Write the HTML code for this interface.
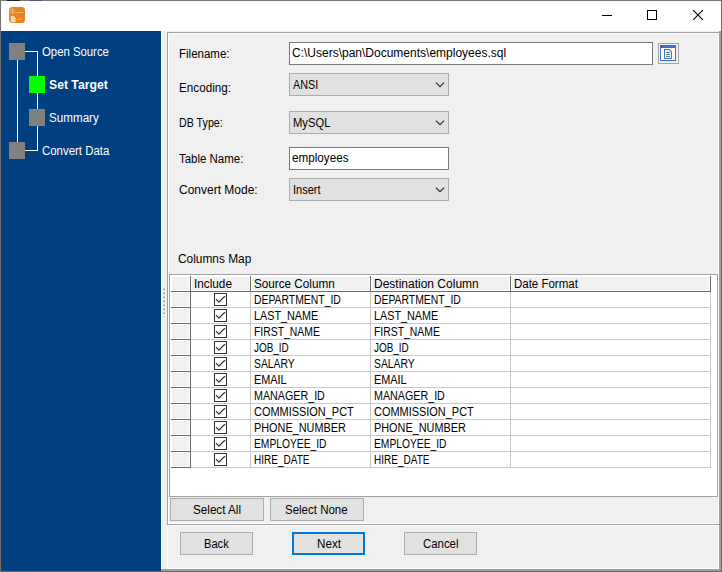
<!DOCTYPE html>
<html><head><meta charset="utf-8">
<style>
*{margin:0;padding:0;box-sizing:border-box}
html,body{width:722px;height:572px;overflow:hidden;background:#f0f0f0}
body{position:relative;font-family:"Liberation Sans",sans-serif;font-size:12px;color:#000}
.a{position:absolute}
.t{position:absolute;white-space:pre;line-height:12px;height:12px;transform-origin:0 0}
.w{color:#fff}
.sq{position:absolute;width:16px;height:17px;background:#808080}
.ln{position:absolute;background:#fff}
.tb{position:absolute;background:#fff;border:1px solid #7a7a7a}
.cb{position:absolute;background:#e1e1e1;border:1px solid #adadad}
.btn{position:absolute;background:#e1e1e1;border:1px solid #adadad}
.chev{position:absolute;width:9px;height:5px}
</style></head><body>
<div class="a" style="left:0;top:0;width:722px;height:1px;background:#777"></div><div class="a" style="left:7px;top:0;width:13px;height:1px;background:#222"></div><div class="a" style="left:30px;top:0;width:12px;height:1px;background:#4a5a78"></div>
<div class="a" style="left:0;top:0;width:1px;height:572px;background:#76716c"></div>
<div class="a" style="left:721px;top:0;width:1px;height:572px;background:#6b6b6b"></div>
<div class="a" style="left:0;top:571px;width:722px;height:1px;background:#6b6b6b"></div>
<div class="a" style="left:1px;top:1px;width:720px;height:30px;background:#fff"></div>
<svg class="a" style="left:9px;top:7px" width="16" height="16" viewBox="0 0 16 16"><rect x="0" y="0" width="16" height="16" rx="3.5" fill="#e8821f"/><circle cx="3.3" cy="4.0" r="2.5" fill="none" stroke="#f5c491" stroke-width="0.5"/><path d="M2.8 2.4h1.2v2.2h-1.2z" fill="#fbe3c8"/><path d="M2.3 4.8h2.2v0.6h-2.2z" fill="#f6c89a"/><path d="M6.3 5.0h8.0v1.1h-8.0z" fill="#f2ad6c"/><path d="M7.9 7.6h0.9v0.9h-0.9z" fill="#f4b77c"/><path d="M2.1 9.3h2.7l1.4 1.4v4.2h-4.1z" fill="#f8d2ac" stroke="#fde8d3" stroke-width="0.6"/><path d="M8.0 11.8h5.0v1.0h-5.0z" fill="#f2ad6c"/></svg>
<div class="a" style="left:602px;top:15px;width:10px;height:1px;background:#000"></div>
<div class="a" style="left:647px;top:10px;width:10px;height:10px;border:1px solid #000"></div>
<svg class="a" style="left:692px;top:9px" width="13" height="13" viewBox="0 0 13 13"><path d="M1.1 1.1L10.9 10.9M10.9 1.1L1.1 10.9" stroke="#000" stroke-width="1.1"/></svg>
<div class="a" style="left:1px;top:31px;width:160px;height:540px;background:#003f80"></div>
<div class="ln" style="left:17px;top:51px;width:1px;height:91px"></div>
<div class="ln" style="left:24px;top:51px;width:14px;height:1px"></div>
<div class="ln" style="left:37px;top:51px;width:1px;height:100px"></div>
<div class="ln" style="left:24px;top:150px;width:14px;height:1px"></div>
<div class="sq" style="left:9px;top:43px"></div>
<div class="sq" style="left:29px;top:76px;background:#00ff00"></div>
<div class="sq" style="left:29px;top:109px"></div>
<div class="sq" style="left:9px;top:142px"></div>

<div class="t" style="left:42px;top:46px;transform:scaleX(0.946);color:#fff">Open Source</div>
<div class="t" style="left:49px;top:79px;transform:scaleX(1.016);color:#fff;font-weight:bold">Set Target</div>
<div class="t" style="left:49px;top:112px;transform:scaleX(0.97);color:#fff">Summary</div>
<div class="t" style="left:42px;top:145px;transform:scaleX(0.952);color:#fff">Convert Data</div>
<div class="a" style="left:161px;top:31px;width:1px;height:540px;background:#fafafa"></div><div class="a" style="left:164px;top:288px;width:1px;height:1px;background:#b0b0b0"></div><div class="a" style="left:163px;top:289px;width:2px;height:1px;background:#a8a8a8"></div><div class="a" style="left:164px;top:292px;width:1px;height:1px;background:#b0b0b0"></div><div class="a" style="left:163px;top:293px;width:2px;height:1px;background:#a8a8a8"></div><div class="a" style="left:164px;top:296px;width:1px;height:1px;background:#b0b0b0"></div><div class="a" style="left:163px;top:297px;width:2px;height:1px;background:#a8a8a8"></div><div class="a" style="left:164px;top:300px;width:1px;height:1px;background:#b0b0b0"></div><div class="a" style="left:163px;top:301px;width:2px;height:1px;background:#a8a8a8"></div><div class="a" style="left:164px;top:304px;width:1px;height:1px;background:#b0b0b0"></div><div class="a" style="left:163px;top:305px;width:2px;height:1px;background:#a8a8a8"></div><div class="a" style="left:164px;top:308px;width:1px;height:1px;background:#b0b0b0"></div><div class="a" style="left:163px;top:309px;width:2px;height:1px;background:#a8a8a8"></div><div class="a" style="left:164px;top:312px;width:1px;height:1px;background:#b0b0b0"></div><div class="a" style="left:163px;top:313px;width:2px;height:1px;background:#a8a8a8"></div><div class="a" style="left:164px;top:316px;width:1px;height:1px;background:#c0c0c0"></div>
<div class="a" style="left:719px;top:31px;width:2px;height:540px;background:#a0a0a0"></div>
<div class="a" style="left:161px;top:569px;width:560px;height:2px;background:#a0a0a0"></div>
<div class="a" style="left:167px;top:32px;width:553px;height:493px;border:1px solid #a0a0a0"></div>
<div class="a" style="left:168px;top:33px;width:551px;height:491px;border:1px solid #fff"></div>
<div class="a" style="left:167px;top:525px;width:552px;height:44px;border:1px solid #fff"></div>

<div class="t" style="left:179px;top:48px;transform:scaleX(0.958);">Filename:</div>
<div class="tb" style="left:289px;top:42px;width:364px;height:23px"></div>
<div class="t" style="left:292px;top:47px;">C:\Users\pan\Documents\employees.sql</div>
<svg class="a" style="left:658px;top:43px" width="21" height="21" viewBox="0 0 21 21"><rect x="0.5" y="0.5" width="20" height="20" fill="#ebe9e6" stroke="#a3a3a3"/><rect x="1.5" y="1.5" width="18" height="18" fill="none" stroke="#f5f5f5"/><rect x="2" y="2" width="16" height="16" fill="#3b72d2"/><rect x="3" y="5" width="14" height="12" fill="#fdfbf4"/><rect x="3" y="3" width="1.4" height="1.4" fill="#e01010"/><path d="M6 6h5.5l2.5 2.5v7.5h-8z" fill="#3f78d4"/><path d="M7 7h4.1l1.9 1.9v6.1h-6z" fill="#e2f6fb"/><rect x="8" y="9" width="4" height="1" fill="#647c7c"/><rect x="8" y="11" width="4" height="1" fill="#647c7c"/><rect x="8" y="13" width="4" height="1" fill="#647c7c"/></svg>
<div class="t" style="left:179px;top:82px;transform:scaleX(0.974);">Encoding:</div>
<div class="cb" style="left:289px;top:73px;width:160px;height:23px"></div>
<div class="t" style="left:293px;top:79px;transform:scaleX(0.9);">ANSI</div>
<svg class="chev" style="left:435px;top:82px;width:10px;height:6px" viewBox="0 0 10 6"><path d="M0.9 0.6L5 4.7L9.1 0.6" stroke="#2a2a2a" stroke-width="1.15" fill="none"/></svg>
<div class="t" style="left:179px;top:117px;transform:scaleX(0.89);">DB Type:</div>
<div class="cb" style="left:289px;top:111px;width:160px;height:23px"></div>
<div class="t" style="left:293px;top:117px;transform:scaleX(0.935);">MySQL</div>
<svg class="chev" style="left:435px;top:120px;width:10px;height:6px" viewBox="0 0 10 6"><path d="M0.9 0.6L5 4.7L9.1 0.6" stroke="#2a2a2a" stroke-width="1.15" fill="none"/></svg>
<div class="t" style="left:179px;top:153px;transform:scaleX(0.955);">Table Name:</div>
<div class="tb" style="left:289px;top:147px;width:160px;height:23px"></div>
<div class="t" style="left:292px;top:152px;transform:scaleX(0.974);">employees</div>
<div class="t" style="left:179px;top:184px;">Convert Mode:</div>
<div class="cb" style="left:289px;top:178px;width:160px;height:23px"></div>
<div class="t" style="left:293px;top:184px;transform:scaleX(0.92);">Insert</div>
<svg class="chev" style="left:435px;top:187px;width:10px;height:6px" viewBox="0 0 10 6"><path d="M0.9 0.6L5 4.7L9.1 0.6" stroke="#2a2a2a" stroke-width="1.15" fill="none"/></svg>
<div class="t" style="left:178px;top:253px;transform:scaleX(0.99);">Columns Map</div>
<div class="a" style="left:169px;top:274px;width:549px;height:223px;background:#fff;border:1px solid #a0a0a0"></div>
<div class="a" style="left:171px;top:276px;width:19px;height:15px;background:#f0f0f0;border:1px solid #fff"></div>
<div class="a" style="left:190px;top:276px;width:1px;height:16px;background:#696969"></div>
<div class="a" style="left:191px;top:276px;width:59px;height:15px;background:#f0f0f0;border:1px solid #fff"></div>
<div class="a" style="left:250px;top:276px;width:1px;height:16px;background:#696969"></div>
<div class="a" style="left:251px;top:276px;width:119px;height:15px;background:#f0f0f0;border:1px solid #fff"></div>
<div class="a" style="left:370px;top:276px;width:1px;height:16px;background:#696969"></div>
<div class="a" style="left:371px;top:276px;width:139px;height:15px;background:#f0f0f0;border:1px solid #fff"></div>
<div class="a" style="left:510px;top:276px;width:1px;height:16px;background:#696969"></div>
<div class="a" style="left:511px;top:276px;width:199px;height:15px;background:#f0f0f0;border:1px solid #fff"></div>
<div class="a" style="left:710px;top:276px;width:1px;height:16px;background:#696969"></div>
<div class="a" style="left:171px;top:291px;width:540px;height:1px;background:#696969"></div>
<div class="t" style="left:194px;top:278px;transform:scaleX(0.98);">Include</div>
<div class="t" style="left:254px;top:278px;transform:scaleX(0.976);">Source Column</div>
<div class="t" style="left:374px;top:278px;">Destination Column</div>
<div class="t" style="left:514px;top:278px;transform:scaleX(0.957);">Date Format</div>
<div class="a" style="left:171px;top:292px;width:19px;height:15px;background:#f0f0f0;border:1px solid #fff"></div>
<div class="a" style="left:171px;top:307px;width:20px;height:1px;background:#696969"></div>
<div class="a" style="left:190px;top:292px;width:1px;height:16px;background:#696969"></div>
<div class="a" style="left:191px;top:307px;width:520px;height:1px;background:#c8c8c8"></div>
<div class="a" style="left:250px;top:292px;width:1px;height:15px;background:#c8c8c8"></div>
<div class="a" style="left:370px;top:292px;width:1px;height:15px;background:#c8c8c8"></div>
<div class="a" style="left:510px;top:292px;width:1px;height:15px;background:#c8c8c8"></div>
<div class="a" style="left:710px;top:292px;width:1px;height:15px;background:#c8c8c8"></div>
<svg class="a" style="left:214px;top:293px" width="13" height="13" viewBox="0 0 13 13"><rect x="0.5" y="0.5" width="12" height="12" fill="#fff" stroke="#333"/><path d="M2 6.1L4.9 9.1L11.1 3.1" stroke="#333" stroke-width="1.3" fill="none"/></svg>
<div class="t" style="left:254px;top:294px;transform:scaleX(0.866);">DEPARTMENT_ID</div>
<div class="t" style="left:374px;top:294px;transform:scaleX(0.866);">DEPARTMENT_ID</div>
<div class="a" style="left:171px;top:308px;width:19px;height:15px;background:#f0f0f0;border:1px solid #fff"></div>
<div class="a" style="left:171px;top:323px;width:20px;height:1px;background:#696969"></div>
<div class="a" style="left:190px;top:308px;width:1px;height:16px;background:#696969"></div>
<div class="a" style="left:191px;top:323px;width:520px;height:1px;background:#c8c8c8"></div>
<div class="a" style="left:250px;top:308px;width:1px;height:15px;background:#c8c8c8"></div>
<div class="a" style="left:370px;top:308px;width:1px;height:15px;background:#c8c8c8"></div>
<div class="a" style="left:510px;top:308px;width:1px;height:15px;background:#c8c8c8"></div>
<div class="a" style="left:710px;top:308px;width:1px;height:15px;background:#c8c8c8"></div>
<svg class="a" style="left:214px;top:309px" width="13" height="13" viewBox="0 0 13 13"><rect x="0.5" y="0.5" width="12" height="12" fill="#fff" stroke="#333"/><path d="M2 6.1L4.9 9.1L11.1 3.1" stroke="#333" stroke-width="1.3" fill="none"/></svg>
<div class="t" style="left:254px;top:310px;transform:scaleX(0.899);">LAST_NAME</div>
<div class="t" style="left:374px;top:310px;transform:scaleX(0.899);">LAST_NAME</div>
<div class="a" style="left:171px;top:324px;width:19px;height:15px;background:#f0f0f0;border:1px solid #fff"></div>
<div class="a" style="left:171px;top:339px;width:20px;height:1px;background:#696969"></div>
<div class="a" style="left:190px;top:324px;width:1px;height:16px;background:#696969"></div>
<div class="a" style="left:191px;top:339px;width:520px;height:1px;background:#c8c8c8"></div>
<div class="a" style="left:250px;top:324px;width:1px;height:15px;background:#c8c8c8"></div>
<div class="a" style="left:370px;top:324px;width:1px;height:15px;background:#c8c8c8"></div>
<div class="a" style="left:510px;top:324px;width:1px;height:15px;background:#c8c8c8"></div>
<div class="a" style="left:710px;top:324px;width:1px;height:15px;background:#c8c8c8"></div>
<svg class="a" style="left:214px;top:325px" width="13" height="13" viewBox="0 0 13 13"><rect x="0.5" y="0.5" width="12" height="12" fill="#fff" stroke="#333"/><path d="M2 6.1L4.9 9.1L11.1 3.1" stroke="#333" stroke-width="1.3" fill="none"/></svg>
<div class="t" style="left:254px;top:326px;transform:scaleX(0.866);">FIRST_NAME</div>
<div class="t" style="left:374px;top:326px;transform:scaleX(0.866);">FIRST_NAME</div>
<div class="a" style="left:171px;top:340px;width:19px;height:15px;background:#f0f0f0;border:1px solid #fff"></div>
<div class="a" style="left:171px;top:355px;width:20px;height:1px;background:#696969"></div>
<div class="a" style="left:190px;top:340px;width:1px;height:16px;background:#696969"></div>
<div class="a" style="left:191px;top:355px;width:520px;height:1px;background:#c8c8c8"></div>
<div class="a" style="left:250px;top:340px;width:1px;height:15px;background:#c8c8c8"></div>
<div class="a" style="left:370px;top:340px;width:1px;height:15px;background:#c8c8c8"></div>
<div class="a" style="left:510px;top:340px;width:1px;height:15px;background:#c8c8c8"></div>
<div class="a" style="left:710px;top:340px;width:1px;height:15px;background:#c8c8c8"></div>
<svg class="a" style="left:214px;top:341px" width="13" height="13" viewBox="0 0 13 13"><rect x="0.5" y="0.5" width="12" height="12" fill="#fff" stroke="#333"/><path d="M2 6.1L4.9 9.1L11.1 3.1" stroke="#333" stroke-width="1.3" fill="none"/></svg>
<div class="t" style="left:254px;top:342px;transform:scaleX(0.826);">JOB_ID</div>
<div class="t" style="left:374px;top:342px;transform:scaleX(0.826);">JOB_ID</div>
<div class="a" style="left:171px;top:356px;width:19px;height:15px;background:#f0f0f0;border:1px solid #fff"></div>
<div class="a" style="left:171px;top:371px;width:20px;height:1px;background:#696969"></div>
<div class="a" style="left:190px;top:356px;width:1px;height:16px;background:#696969"></div>
<div class="a" style="left:191px;top:371px;width:520px;height:1px;background:#c8c8c8"></div>
<div class="a" style="left:250px;top:356px;width:1px;height:15px;background:#c8c8c8"></div>
<div class="a" style="left:370px;top:356px;width:1px;height:15px;background:#c8c8c8"></div>
<div class="a" style="left:510px;top:356px;width:1px;height:15px;background:#c8c8c8"></div>
<div class="a" style="left:710px;top:356px;width:1px;height:15px;background:#c8c8c8"></div>
<svg class="a" style="left:214px;top:357px" width="13" height="13" viewBox="0 0 13 13"><rect x="0.5" y="0.5" width="12" height="12" fill="#fff" stroke="#333"/><path d="M2 6.1L4.9 9.1L11.1 3.1" stroke="#333" stroke-width="1.3" fill="none"/></svg>
<div class="t" style="left:254px;top:358px;transform:scaleX(0.864);">SALARY</div>
<div class="t" style="left:374px;top:358px;transform:scaleX(0.864);">SALARY</div>
<div class="a" style="left:171px;top:372px;width:19px;height:15px;background:#f0f0f0;border:1px solid #fff"></div>
<div class="a" style="left:171px;top:387px;width:20px;height:1px;background:#696969"></div>
<div class="a" style="left:190px;top:372px;width:1px;height:16px;background:#696969"></div>
<div class="a" style="left:191px;top:387px;width:520px;height:1px;background:#c8c8c8"></div>
<div class="a" style="left:250px;top:372px;width:1px;height:15px;background:#c8c8c8"></div>
<div class="a" style="left:370px;top:372px;width:1px;height:15px;background:#c8c8c8"></div>
<div class="a" style="left:510px;top:372px;width:1px;height:15px;background:#c8c8c8"></div>
<div class="a" style="left:710px;top:372px;width:1px;height:15px;background:#c8c8c8"></div>
<svg class="a" style="left:214px;top:373px" width="13" height="13" viewBox="0 0 13 13"><rect x="0.5" y="0.5" width="12" height="12" fill="#fff" stroke="#333"/><path d="M2 6.1L4.9 9.1L11.1 3.1" stroke="#333" stroke-width="1.3" fill="none"/></svg>
<div class="t" style="left:254px;top:374px;transform:scaleX(0.906);">EMAIL</div>
<div class="t" style="left:374px;top:374px;transform:scaleX(0.906);">EMAIL</div>
<div class="a" style="left:171px;top:388px;width:19px;height:15px;background:#f0f0f0;border:1px solid #fff"></div>
<div class="a" style="left:171px;top:403px;width:20px;height:1px;background:#696969"></div>
<div class="a" style="left:190px;top:388px;width:1px;height:16px;background:#696969"></div>
<div class="a" style="left:191px;top:403px;width:520px;height:1px;background:#c8c8c8"></div>
<div class="a" style="left:250px;top:388px;width:1px;height:15px;background:#c8c8c8"></div>
<div class="a" style="left:370px;top:388px;width:1px;height:15px;background:#c8c8c8"></div>
<div class="a" style="left:510px;top:388px;width:1px;height:15px;background:#c8c8c8"></div>
<div class="a" style="left:710px;top:388px;width:1px;height:15px;background:#c8c8c8"></div>
<svg class="a" style="left:214px;top:389px" width="13" height="13" viewBox="0 0 13 13"><rect x="0.5" y="0.5" width="12" height="12" fill="#fff" stroke="#333"/><path d="M2 6.1L4.9 9.1L11.1 3.1" stroke="#333" stroke-width="1.3" fill="none"/></svg>
<div class="t" style="left:254px;top:390px;transform:scaleX(0.893);">MANAGER_ID</div>
<div class="t" style="left:374px;top:390px;transform:scaleX(0.893);">MANAGER_ID</div>
<div class="a" style="left:171px;top:404px;width:19px;height:15px;background:#f0f0f0;border:1px solid #fff"></div>
<div class="a" style="left:171px;top:419px;width:20px;height:1px;background:#696969"></div>
<div class="a" style="left:190px;top:404px;width:1px;height:16px;background:#696969"></div>
<div class="a" style="left:191px;top:419px;width:520px;height:1px;background:#c8c8c8"></div>
<div class="a" style="left:250px;top:404px;width:1px;height:15px;background:#c8c8c8"></div>
<div class="a" style="left:370px;top:404px;width:1px;height:15px;background:#c8c8c8"></div>
<div class="a" style="left:510px;top:404px;width:1px;height:15px;background:#c8c8c8"></div>
<div class="a" style="left:710px;top:404px;width:1px;height:15px;background:#c8c8c8"></div>
<svg class="a" style="left:214px;top:405px" width="13" height="13" viewBox="0 0 13 13"><rect x="0.5" y="0.5" width="12" height="12" fill="#fff" stroke="#333"/><path d="M2 6.1L4.9 9.1L11.1 3.1" stroke="#333" stroke-width="1.3" fill="none"/></svg>
<div class="t" style="left:254px;top:406px;transform:scaleX(0.912);">COMMISSION_PCT</div>
<div class="t" style="left:374px;top:406px;transform:scaleX(0.912);">COMMISSION_PCT</div>
<div class="a" style="left:171px;top:420px;width:19px;height:15px;background:#f0f0f0;border:1px solid #fff"></div>
<div class="a" style="left:171px;top:435px;width:20px;height:1px;background:#696969"></div>
<div class="a" style="left:190px;top:420px;width:1px;height:16px;background:#696969"></div>
<div class="a" style="left:191px;top:435px;width:520px;height:1px;background:#c8c8c8"></div>
<div class="a" style="left:250px;top:420px;width:1px;height:15px;background:#c8c8c8"></div>
<div class="a" style="left:370px;top:420px;width:1px;height:15px;background:#c8c8c8"></div>
<div class="a" style="left:510px;top:420px;width:1px;height:15px;background:#c8c8c8"></div>
<div class="a" style="left:710px;top:420px;width:1px;height:15px;background:#c8c8c8"></div>
<svg class="a" style="left:214px;top:421px" width="13" height="13" viewBox="0 0 13 13"><rect x="0.5" y="0.5" width="12" height="12" fill="#fff" stroke="#333"/><path d="M2 6.1L4.9 9.1L11.1 3.1" stroke="#333" stroke-width="1.3" fill="none"/></svg>
<div class="t" style="left:254px;top:422px;transform:scaleX(0.906);">PHONE_NUMBER</div>
<div class="t" style="left:374px;top:422px;transform:scaleX(0.906);">PHONE_NUMBER</div>
<div class="a" style="left:171px;top:436px;width:19px;height:15px;background:#f0f0f0;border:1px solid #fff"></div>
<div class="a" style="left:171px;top:451px;width:20px;height:1px;background:#696969"></div>
<div class="a" style="left:190px;top:436px;width:1px;height:16px;background:#696969"></div>
<div class="a" style="left:191px;top:451px;width:520px;height:1px;background:#c8c8c8"></div>
<div class="a" style="left:250px;top:436px;width:1px;height:15px;background:#c8c8c8"></div>
<div class="a" style="left:370px;top:436px;width:1px;height:15px;background:#c8c8c8"></div>
<div class="a" style="left:510px;top:436px;width:1px;height:15px;background:#c8c8c8"></div>
<div class="a" style="left:710px;top:436px;width:1px;height:15px;background:#c8c8c8"></div>
<svg class="a" style="left:214px;top:437px" width="13" height="13" viewBox="0 0 13 13"><rect x="0.5" y="0.5" width="12" height="12" fill="#fff" stroke="#333"/><path d="M2 6.1L4.9 9.1L11.1 3.1" stroke="#333" stroke-width="1.3" fill="none"/></svg>
<div class="t" style="left:254px;top:438px;transform:scaleX(0.856);">EMPLOYEE_ID</div>
<div class="t" style="left:374px;top:438px;transform:scaleX(0.856);">EMPLOYEE_ID</div>
<div class="a" style="left:171px;top:452px;width:19px;height:15px;background:#f0f0f0;border:1px solid #fff"></div>
<div class="a" style="left:171px;top:467px;width:20px;height:1px;background:#696969"></div>
<div class="a" style="left:190px;top:452px;width:1px;height:16px;background:#696969"></div>
<div class="a" style="left:191px;top:467px;width:520px;height:1px;background:#c8c8c8"></div>
<div class="a" style="left:250px;top:452px;width:1px;height:15px;background:#c8c8c8"></div>
<div class="a" style="left:370px;top:452px;width:1px;height:15px;background:#c8c8c8"></div>
<div class="a" style="left:510px;top:452px;width:1px;height:15px;background:#c8c8c8"></div>
<div class="a" style="left:710px;top:452px;width:1px;height:15px;background:#c8c8c8"></div>
<svg class="a" style="left:214px;top:453px" width="13" height="13" viewBox="0 0 13 13"><rect x="0.5" y="0.5" width="12" height="12" fill="#fff" stroke="#333"/><path d="M2 6.1L4.9 9.1L11.1 3.1" stroke="#333" stroke-width="1.3" fill="none"/></svg>
<div class="t" style="left:254px;top:454px;transform:scaleX(0.834);">HIRE_DATE</div>
<div class="t" style="left:374px;top:454px;transform:scaleX(0.834);">HIRE_DATE</div>
<div class="btn" style="left:170px;top:498px;width:94px;height:23px"></div>
<div class="t" style="left:193px;top:504px;transform:scaleX(0.973);">Select All</div>
<div class="btn" style="left:270px;top:498px;width:94px;height:23px"></div>
<div class="t" style="left:285px;top:504px;transform:scaleX(0.958);">Select None</div>
<div class="btn" style="left:180px;top:532px;width:73px;height:23px"></div>
<div class="t" style="left:204px;top:538px;transform:scaleX(0.926);">Back</div>
<div class="btn" style="left:292px;top:532px;width:73px;height:23px;border:2px solid #0078d7"></div>
<div class="t" style="left:317px;top:538px;transform:scaleX(0.97);">Next</div>
<div class="btn" style="left:404px;top:532px;width:73px;height:23px"></div>
<div class="t" style="left:423px;top:538px;transform:scaleX(0.95);">Cancel</div>
</body></html>
